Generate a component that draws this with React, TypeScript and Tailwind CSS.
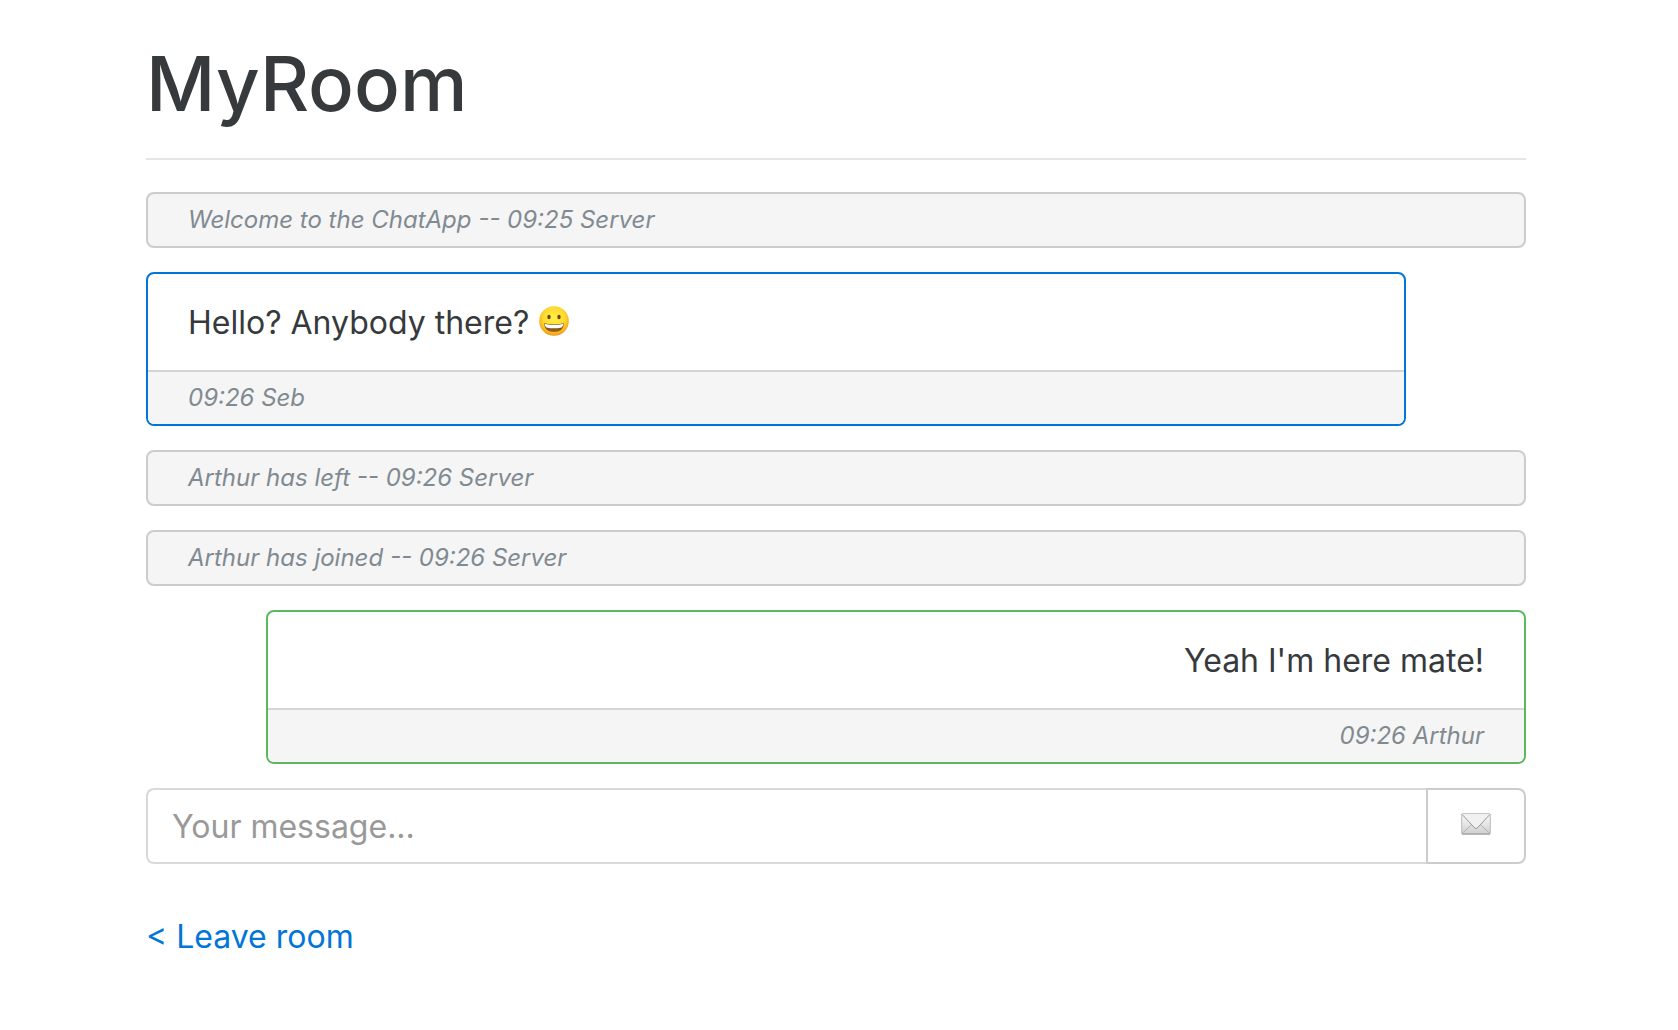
import { useState } from "react";
import type { ReactNode } from "react";

function Grin() {
  return (
    <svg viewBox="0 0 32 32" role="img" aria-label="Grinning face" className="mb-[9px] ml-[9px] inline-block size-8">
      <defs>
        <radialGradient id="face" cx="0.5" cy="0.4" r="0.62">
          <stop offset="0" stopColor="#fff04a" />
          <stop offset="0.6" stopColor="#ffd92e" />
          <stop offset="0.88" stopColor="#f8a91c" />
          <stop offset="1" stopColor="#e88b12" />
        </radialGradient>
        <linearGradient id="mouth" x1="0" y1="0" x2="0" y2="1">
          <stop offset="0" stopColor="#5b3410" />
          <stop offset="1" stopColor="#a3661c" />
        </linearGradient>
      </defs>
      <circle cx="16" cy="16" r="14.8" fill="url(#face)" />
      <ellipse cx="11" cy="12" rx="1.7" ry="2.2" fill="#70430f" />
      <ellipse cx="21" cy="12" rx="1.7" ry="2.2" fill="#70430f" />
      <path d="M6.2 18.2Q16 20.8 25.8 18.2Q25.6 27 16 27Q6.4 27 6.2 18.2Z" fill="url(#mouth)" />
      <path d="M6.6 18.8Q16 21.2 25.4 18.8Q25.2 21.2 23.6 22.4Q16 24.2 8.4 22.4Q6.8 21.2 6.6 18.8Z" fill="#fff" />
    </svg>
  );
}

function Envelope() {
  return (
    <svg viewBox="0 0 30 22" aria-hidden="true" className="mb-1 h-[22px] w-[30px]">
      <defs>
        <linearGradient id="paper" x1="0" y1="0" x2="0" y2="1">
          <stop offset="0" stopColor="#fafafa" />
          <stop offset="1" stopColor="#cfcfcf" />
        </linearGradient>
      </defs>
      <rect x="0.7" y="0.7" width="28.6" height="20.4" rx="0.8" fill="url(#paper)" stroke="#b9b9b9" />
      <path d="M1 20.6L11 11.4M29 20.6L19 11.4" fill="none" stroke="#b4b4b4" />
      <path d="M1 1.4L13.8 15Q15 16.2 16.2 15L29 1.4" fill="#f1f1f1" stroke="#999" />
      <path d="M1 21H29" stroke="#a3a3a3" strokeWidth="1.2" />
    </svg>
  );
}

function Notice({ children }: { children: ReactNode }) {
  return (
    <li className="rounded-lg border-2 border-[#cccccc] bg-[#f5f5f5] px-10 py-2 text-2xl/9 text-[#818a91] italic">
      {children}
    </li>
  );
}

function Message({ own = false, meta, children }: { own?: boolean; meta: string; children: ReactNode }) {
  return (
    <li
      className={
        own
          ? "ml-30 overflow-hidden rounded-lg border-2 border-[#5cb85c] text-right"
          : "mr-30 overflow-hidden rounded-lg border-2 border-[#0275d8]"
      }
    >
      <p className="px-10 pt-[25px] pb-[23px] text-[32px]/12">{children}</p>
      <footer className="border-t-2 border-[#d5d5d5] bg-[#f5f5f5] px-10 py-2 text-2xl/9 text-[#818a91] italic">
        {meta}
      </footer>
    </li>
  );
}

export default function App() {
  const [text, setText] = useState("");
  return (
    <main className="min-h-screen bg-white pt-[38px] pr-[152px] pb-8 pl-[146px] font-[Inter,sans-serif] text-[#373a3c]">
      <h1 className="text-[76px]/[90px] font-medium">MyRoom</h1>
      <hr className="mt-[30px] border-t-2 border-[#e5e5e5]" />
      <ul className="mt-8 flex flex-col gap-6">
        <Notice>Welcome to the ChatApp -- 09:25 Server</Notice>
        <Message meta="09:26 Seb">
          Hello? Anybody there?
          <Grin />
        </Message>
        <Notice>Arthur has left -- 09:26 Server</Notice>
        <Notice>Arthur has joined -- 09:26 Server</Notice>
        <Message own meta="09:26 Arthur">
          Yeah I'm here mate!
        </Message>
      </ul>
      <form className="mt-6 flex h-[76px]" onSubmit={(e) => e.preventDefault()}>
        <input
          type="text"
          aria-label="Your message"
          placeholder="Your message..."
          value={text}
          onChange={(e) => setText(e.target.value)}
          className="min-w-0 flex-1 rounded-l-lg border-2 border-r-0 border-[#d9d9d9] px-6 pt-0.5 text-[32px] outline-none placeholder:text-[#999999]"
        />
        <button
          type="submit"
          aria-label="Send message"
          className="flex w-[100px] items-center justify-center rounded-r-lg border-2 border-[#cccccc] bg-white"
        >
          <Envelope />
        </button>
      </form>
      <a href="#rooms" className="mt-[49px] inline-block text-[32px]/12 text-[#0275d8]">
        &lt; Leave room
      </a>
    </main>
  );
}
